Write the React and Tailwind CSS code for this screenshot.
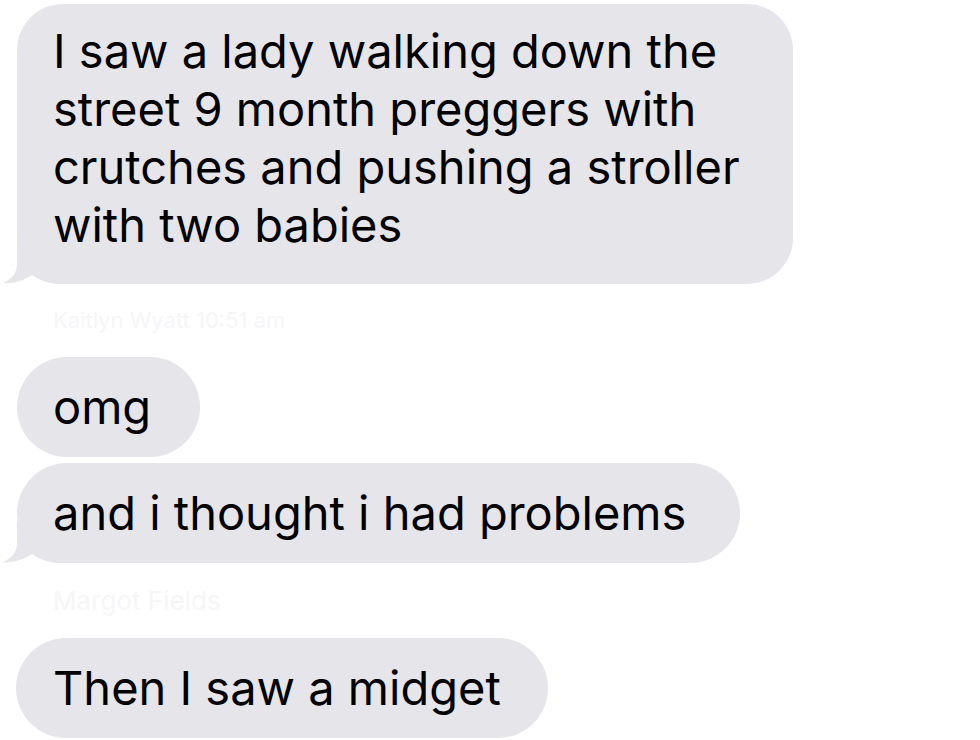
import React from "react";

function Tail() {
  return (
    <svg
      className="absolute left-[-16px] bottom-0"
      width="64"
      height="42"
      viewBox="0 0 64 42"
    >
      <path
        d="M16,0 L16,22 C16,31 11,37 2,41 C11,42 22,39 31,33 C38,38 46,41 56,42 L64,42 L64,0 Z"
        fill="#e5e5ea"
      />
    </svg>
  );
}

export default function App() {
  const font = { fontFamily: "Inter, Roboto, 'Noto Sans', sans-serif" };
  return (
    <div className="w-[980px] h-[740px] bg-white overflow-hidden" style={font}>
      <div className="flex flex-col items-start pl-[17px] pt-[4px]">
        <div className="relative w-[776px] h-[280px] rounded-[46px] bg-[#e5e5ea] pl-[36px] pt-[18px] text-[47px] leading-[58px] text-black">
          <Tail />
          <div className="relative">
            I saw a lady walking down the
            <br />
            street 9 month preggers with
            <br />
            crutches and pushing a stroller
            <br />
            with two babies
          </div>
        </div>

        <div className="h-[73px] flex items-center pl-[36px] text-[22px] text-[#f6f6f8]">
          Kaitlyn Wyatt 10:51 am
        </div>

        <div className="w-[183px] h-[100px] rounded-full bg-[#e5e5ea] pl-[36px] flex items-center text-[47px] text-black">
          omg
        </div>

        <div className="relative mt-[6px] w-[723px] h-[100px] rounded-[50px] bg-[#e5e5ea] pl-[36px] flex items-center text-[47px] text-black">
          <Tail />
          <span className="relative">and i thought i had problems</span>
        </div>

        <div className="h-[75px] flex items-center pl-[36px] text-[26px] text-[#f6f6f8]">
          Margot Fields
        </div>

        <div className="-ml-[1px] w-[532px] h-[100px] rounded-full bg-[#e5e5ea] pl-[37px] flex items-center text-[47px] text-black">
          Then I saw a midget
        </div>
      </div>
    </div>
  );
}
